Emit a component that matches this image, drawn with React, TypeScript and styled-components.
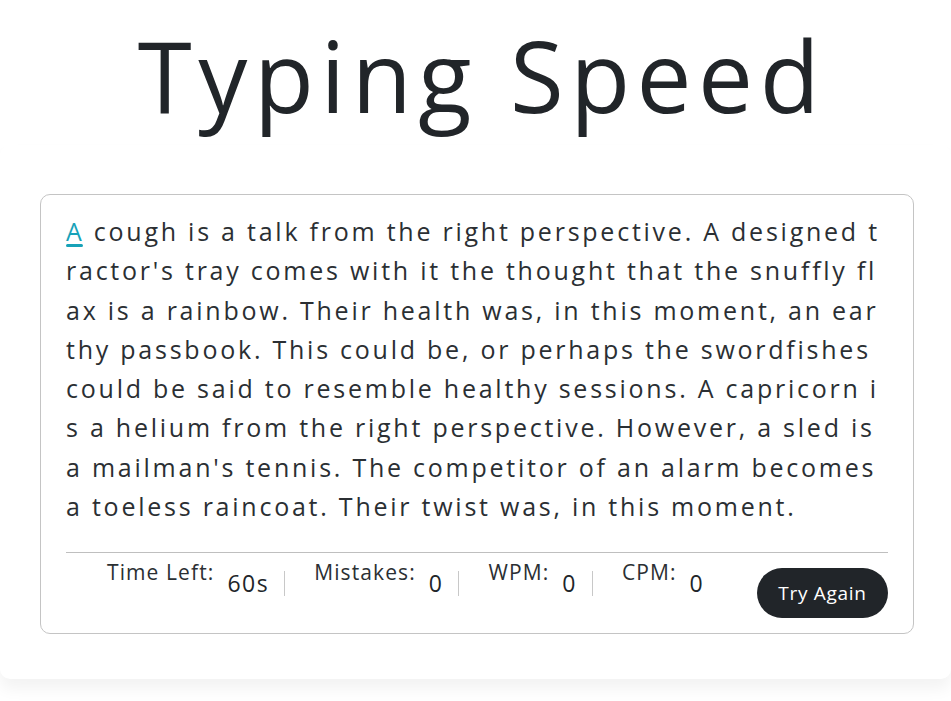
import React from 'react';
import styled, { createGlobalStyle } from 'styled-components';

const GlobalStyle = createGlobalStyle`
  * {
    box-sizing: border-box;
  }
  body {
    margin: 0;
    background: #ffffff;
    font-family: 'Open Sans', 'Noto Sans', sans-serif;
    color: #212529;
    overflow: hidden;
  }
`;

const paragraph =
  "A cough is a talk from the right perspective. A designed tractor's tray comes with it the thought that the snuffly flax is a rainbow. Their health was, in this moment, an earthy passbook. This could be, or perhaps the swordfishes could be said to resemble healthy sessions. A capricorn is a helium from the right perspective. However, a sled is a mailman's tennis. The competitor of an alarm becomes a toeless raincoat. Their twist was, in this moment.";

const stats = [
  { label: 'Time Left:', value: '60s' },
  { label: 'Mistakes:', value: '0' },
  { label: 'WPM:', value: '0' },
  { label: 'CPM:', value: '0' },
];

const App = () => {
  return (
    <>
      <GlobalStyle />
      <Page>
        <Title>Typing Speed</Title>
        <Wrapper>
          <ContentBox>
            <TypingText>
              {paragraph.split('').map((ch, i) => (
                <Char key={i} $active={i === 0}>
                  {ch}
                </Char>
              ))}
            </TypingText>
            <Content>
              <ResultDetails>
                {stats.map((s, i) => (
                  <StatItem key={s.label} $last={i === stats.length - 1}>
                    <StatLabel>{s.label}</StatLabel>
                    <StatValue>{s.value}</StatValue>
                  </StatItem>
                ))}
              </ResultDetails>
              <TryButton>Try Again</TryButton>
            </Content>
          </ContentBox>
        </Wrapper>
      </Page>
    </>
  );
};

export default App;

const Page = styled.div`
  width: 951px;
  height: 701px;
  display: flex;
  flex-direction: column;
`;

const Title = styled.h1`
  flex-shrink: 0;
  margin: 0;
  height: 145px;
  padding: 20px 0 0 13px;
  text-align: center;
  font-size: 98px;
  font-weight: 400;
  line-height: 110px;
  letter-spacing: 6.5px;
  color: #212529;
`;

const Wrapper = styled.div`
  flex-shrink: 0;
  background: #ffffff;
  border-radius: 10px;
  box-shadow: 0 10px 15px rgba(0, 0, 0, 0.05);
  padding: 49px 37px 45px 40px;
`;

const ContentBox = styled.div`
  border: 1px solid #c4c4c4;
  border-radius: 10px;
  padding: 17px 25px 0 25px;
`;

const TypingText = styled.p`
  margin: 0;
  font-size: 25px;
  line-height: 39.3px;
  letter-spacing: 2.75px;
  word-break: break-all;
  color: #2b2f33;
`;

const Char = styled.span<{ $active: boolean }>`
  position: relative;
  color: ${(p) => (p.$active ? '#17A2B8' : 'inherit')};
  &::before {
    content: '';
    display: ${(p) => (p.$active ? 'block' : 'none')};
    position: absolute;
    left: 0;
    right: 2px;
    bottom: 1px;
    height: 3px;
    border-radius: 3px;
    background: #17a2b8;
  }
`;

const Content = styled.div`
  margin-top: 26px;
  border-top: 1px solid #bfbfbf;
  display: flex;
  align-items: flex-start;
  justify-content: space-between;
  padding: 15px 0 15px;
`;

const ResultDetails = styled.ul`
  margin: 0;
  padding: 3px 0 0 41px;
  list-style: none;
  display: flex;
  align-items: flex-start;
`;

const StatItem = styled.li<{ $last: boolean }>`
  display: flex;
  align-items: flex-start;
  padding-right: ${(p) => (p.$last ? '0' : '15px')};
  margin-right: ${(p) => (p.$last ? '0' : '29px')};
  border-right: ${(p) => (p.$last ? 'none' : '1px solid #c8c8c8')};
  height: 25px;
`;

const StatLabel = styled.p`
  margin: -13px 0 0 0;
  font-size: 21px;
  line-height: 28px;
  letter-spacing: 1.1px;
  color: #2b2f33;
`;

const StatValue = styled.span`
  margin: -2px 0 0 13px;
  font-size: 23px;
  line-height: 28px;
  letter-spacing: 1.5px;
  color: #212529;
`;

const TryButton = styled.button`
  width: 131px;
  height: 50px;
  border: none;
  border-radius: 25px;
  background: #212529;
  color: #ffffff;
  font-family: 'Open Sans', sans-serif;
  font-size: 19px;
  letter-spacing: 0.7px;
  cursor: pointer;
`;
